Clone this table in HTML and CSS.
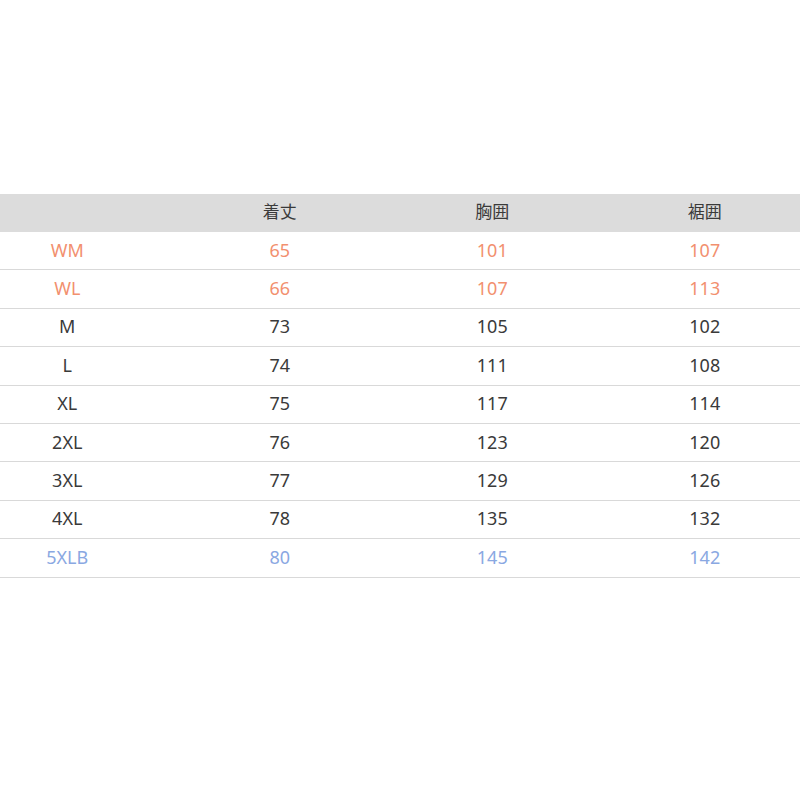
FILE: index.html
```html
<!DOCTYPE html>
<html lang="ja">
<head>
<meta charset="utf-8">
<link rel="stylesheet" href="styles.css">
</head>
<body>
<div class="page">
  <div class="table">
    <div class="row head"><div></div><div>着丈</div><div>胸囲</div><div>裾囲</div></div>
    <div class="row orange"><div>WM</div><div>65</div><div>101</div><div>107</div></div>
    <div class="row orange"><div>WL</div><div>66</div><div>107</div><div>113</div></div>
    <div class="row"><div>M</div><div>73</div><div>105</div><div>102</div></div>
    <div class="row"><div>L</div><div>74</div><div>111</div><div>108</div></div>
    <div class="row"><div>XL</div><div>75</div><div>117</div><div>114</div></div>
    <div class="row"><div>2XL</div><div>76</div><div>123</div><div>120</div></div>
    <div class="row"><div>3XL</div><div>77</div><div>129</div><div>126</div></div>
    <div class="row"><div>4XL</div><div>78</div><div>135</div><div>132</div></div>
    <div class="row blue"><div>5XLB</div><div>80</div><div>145</div><div>142</div></div>
  </div>
</div>
</body>
</html>
```
FILE: styles.css
```css
html, body {
  margin: 0;
  padding: 0;
  background: #ffffff;
}
.page {
  width: 800px;
  height: 800px;
  overflow: hidden;
  padding-top: 194px;
  box-sizing: border-box;
}
.table {
  width: 850px;
  margin-left: -39px;
  font-family: "Noto Sans", "Noto Sans CJK JP", sans-serif;
  font-size: 18px;
  color: #3a3a3a;
}
.row {
  display: grid;
  grid-template-columns: repeat(4, 1fr);
  height: 38.4px;
  box-sizing: border-box;
  border-bottom: 1px solid #d9d9d9;
  align-items: center;
  text-align: center;
  line-height: 1;
  padding-bottom: 2px;
}
.row.head {
  height: 38px;
  background: #dcdcdc;
  border-bottom: none;
  padding-bottom: 4px;
  font-size: 17px;
}
.row.orange { color: #f2906f; }
.row.blue { color: #8aa8e2; }
```
